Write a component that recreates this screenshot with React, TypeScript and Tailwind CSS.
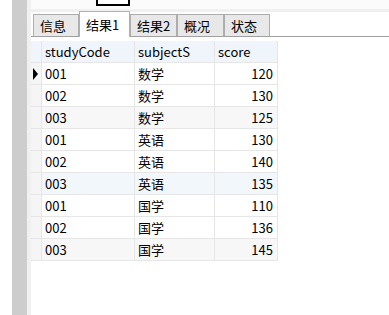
import React from "react";

const rows: [string, string, string, string][] = [
  ["001", "数学", "120", "w"],
  ["002", "数学", "130", "w"],
  ["003", "数学", "125", "g"],
  ["001", "英语", "130", "w"],
  ["002", "英语", "140", "w"],
  ["003", "英语", "135", "b"],
  ["001", "国学", "110", "w"],
  ["002", "国学", "136", "w"],
  ["003", "国学", "145", "g"],
];

const tabs = [
  { label: "信息", w: "w-[46px]", sel: false },
  { label: "结果1", w: "w-[51px]", sel: true },
  { label: "结果2", w: "w-[47px]", sel: false },
  { label: "概况", w: "w-[47px]", sel: false },
  { label: "状态", w: "w-[46px]", sel: false },
];

export default function App() {
  return (
    <div
      className="flex h-[315px] w-[389px] overflow-hidden bg-white text-[13px] text-black"
      style={{ fontFamily: '"Noto Sans CJK SC", "Noto Sans", sans-serif' }}
    >
      <div className="w-[12px] shrink-0 bg-white" />
      <div className="w-[15px] shrink-0 bg-[#cdcdcd]" />
      <div className="w-[4px] shrink-0 bg-[#f0f0f0]" />
      <div className="flex min-w-0 flex-1 flex-col">
        <div className="h-[9px] bg-[#fbfbfb]">
          <div className="ml-[65px] h-[6px] w-[34px] border-2 border-t-0 border-black bg-white" />
        </div>
        <div className="h-[3px] bg-[#f0f0f0]" />
        <div className="flex h-[25px] items-end border-b border-[#a0a0a0] pl-[2px]">
          {tabs.map((t) =>
            t.sel ? (
              <div
                key={t.label}
                className={`${t.w} -mb-px flex h-[26px] items-center border border-b-0 border-[#b0b0b0] bg-white pl-[6px] leading-none`}
              >
                {t.label}
              </div>
            ) : (
              <div
                key={t.label}
                className={`${t.w} flex h-[22px] items-center border border-b-0 border-[#adadad] bg-[#e8e8e8] pl-[6px] leading-none`}
              >
                {t.label}
              </div>
            )
          )}
        </div>
        <div className="h-[4px]" />
        <div className="grid w-[247px] grid-cols-[11px_93px_80px_63px]">
          <div className="h-[22px] border-b border-r border-[#e6e6e6] bg-[#f0f5fb]" />
          <div className="flex h-[22px] items-center border-b border-r border-[#e6e6e6] bg-[#f0f5fb] pl-[3px]">
            studyCode
          </div>
          <div className="flex h-[22px] items-center border-b border-r border-[#e6e6e6] bg-[#f0f5fb] pl-[3px]">
            subjectS
          </div>
          <div className="flex h-[22px] items-center border-b border-r border-[#e6e6e6] bg-[#f0f5fb] pl-[3px]">
            score
          </div>
          {rows.map((r, i) => {
            const bg =
              r[3] === "g" ? "bg-[#f7f7f7]" : r[3] === "b" ? "bg-[#f2f7fc]" : "bg-white";
            return (
              <React.Fragment key={i}>
                <div className="flex h-[22px] items-center border-b border-r border-[#e6e6e6] bg-[#f5f5f5] pl-[2px]">
                  {i === 0 && (
                    <svg width="6" height="12" viewBox="0 0 6 12">
                      <path d="M0 0 L5 6 L0 12 Z" fill="#000" />
                    </svg>
                  )}
                </div>
                <div className={`flex h-[22px] items-center border-b border-r border-[#e6e6e6] ${bg} pl-[3px]`}>
                  {r[0]}
                </div>
                <div className={`flex h-[22px] items-center border-b border-r border-[#e6e6e6] ${bg} pl-[3px]`}>
                  {r[1]}
                </div>
                <div className={`flex h-[22px] items-center justify-end border-b border-r border-[#e6e6e6] ${bg} pr-[4px]`}>
                  {r[2]}
                </div>
              </React.Fragment>
            );
          })}
        </div>
      </div>
    </div>
  );
}
